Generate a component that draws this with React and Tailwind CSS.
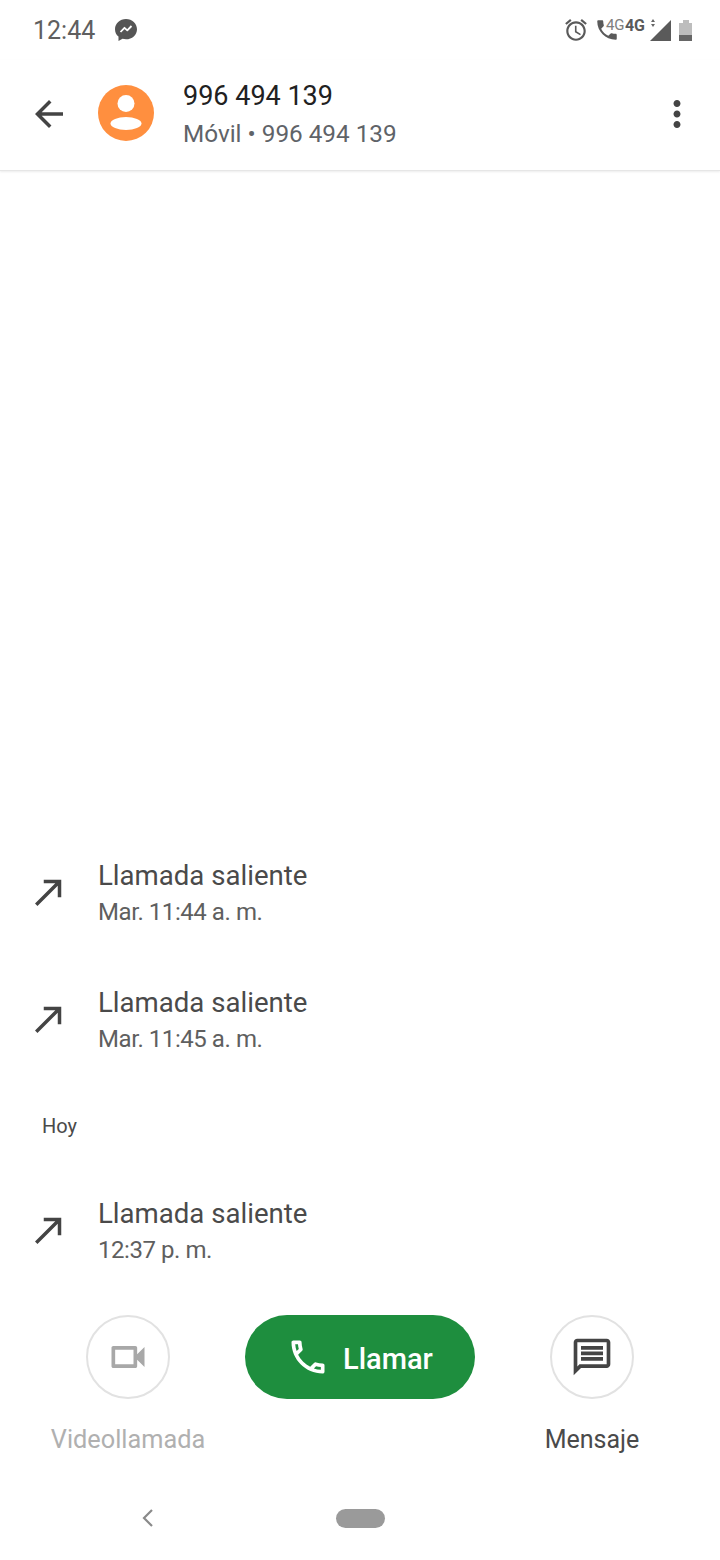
import React from 'react'

const font = { fontFamily: 'Roboto, "Liberation Sans", sans-serif' }

function Icon({ d, size = 42, className = '' }) {
  return (
    <svg width={size} height={size} viewBox="0 0 24 24" fill="currentColor" className={className}>
      <path d={d} />
    </svg>
  )
}

const paths = {
  back: 'M20 11H7.83l5.59-5.59L12 4l-8 8 8 8 1.41-1.41L7.83 13H20v-2z',
  more: 'M12 8c1.1 0 2-.9 2-2s-.9-2-2-2-2 .9-2 2 .9 2 2 2zm0 2c-1.1 0-2 .9-2 2s.9 2 2 2 2-.9 2-2-.9-2-2-2zm0 6c-1.1 0-2 .9-2 2s.9 2 2 2 2-.9 2-2-.9-2-2-2z',
  made: 'M9 5v2h6.59L4 18.59 5.41 20 17 8.41V15h2V5z',
  alarm: 'M22 5.72l-4.6-3.86-1.29 1.53 4.6 3.86L22 5.72zM7.88 3.39L6.6 1.86 2 5.71l1.29 1.53 4.59-3.85zM12.5 8H11v6l4.75 2.85.75-1.23-4-2.37V8zM12 4c-4.97 0-9 4.03-9 9s4.02 9 9 9c4.97 0 9-4.03 9-9s-4.03-9-9-9zm0 16c-3.87 0-7-3.13-7-7s3.13-7 7-7 7 3.13 7 7-3.13 7-7 7z',
  phoneFilled: 'M6.62 10.79c1.44 2.83 3.76 5.14 6.59 6.59l2.2-2.2c.27-.27.67-.36 1.02-.24 1.12.37 2.33.57 3.57.57.55 0 1 .45 1 1V20c0 .55-.45 1-1 1-9.39 0-17-7.61-17-17 0-.55.45-1 1-1h3.5c.55 0 1 .45 1 1 0 1.25.2 2.45.57 3.57.11.35.03.74-.25 1.02l-2.2 2.2z',
  phone: 'M6.54 5c.06.89.21 1.76.45 2.59l-1.2 1.2c-.41-1.2-.67-2.47-.76-3.79h1.51m9.86 12.02c.85.24 1.72.39 2.6.45v1.49c-1.32-.09-2.59-.35-3.8-.75l1.2-1.19M7.5 3H4c-.55 0-1 .45-1 1 0 9.39 7.61 17 17 17 .55 0 1-.45 1-1v-3.49c0-.55-.45-1-1-1-1.24 0-2.45-.2-3.57-.57-.1-.04-.21-.05-.31-.05-.26 0-.51.1-.71.29l-2.2 2.2c-2.83-1.45-5.15-3.76-6.59-6.59l2.2-2.2c.28-.28.36-.67.25-1.02C8.7 6.45 8.5 5.25 8.5 4c0-.55-.45-1-1-1z',
  video: 'M15 8v8H5V8h10m1-2H4c-.55 0-1 .45-1 1v10c0 .55.45 1 1 1h12c.55 0 1-.45 1-1v-3.5l4 4v-11l-4 4V7c0-.55-.45-1-1-1z',
  message: 'M20 2H4c-1.1 0-1.99.9-1.99 2L2 22l4-4h14c1.1 0 2-.9 2-2V4c0-1.1-.9-2-2-2zm0 14H5.17L4 17.17V4h16v12zM18 14H6v-2h12v2zm0-3H6V9h12v2zm0-3H6V6h12v2z',
}

function StatusBar() {
  return (
    <div className="h-[60px] flex items-center justify-between pl-[33px] pr-[28px] text-[#5f5f5f]">
      <div className="flex items-center">
        <span className="text-[25px] leading-none">12:44</span>
        <svg width="24" height="24" viewBox="0 0 24 24" className="ml-[19px]">
          <path fill="#555555" d="M12 1C5.9 1 1 5.5 1 11.2c0 3 1.3 5.6 3.5 7.4V23l4-2.2c1.1.3 2.3.5 3.5.5 6.1 0 11-4.5 11-10.1S18.100 1 12 1z" />
          <path fill="none" stroke="#ffffff" strokeWidth="1.8" strokeLinejoin="round" d="M6.500 14l4-4.200 2.800 2.500 4.200-4.300" />
        </svg>
      </div>
      <div className="flex items-center">
        <Icon d={paths.alarm} size={26} className="text-[#5a5a5a]" />
        <div className="relative ml-[5px] w-[26px] h-[26px]">
          <Icon d={paths.phoneFilled} size={26} className="absolute left-0 top-0 text-[#5a5a5a]" />
          <span className="absolute left-[12px] top-[1px] text-[15px] leading-none text-[#808080]">4G</span>
        </div>
        <span className="ml-[5px] mb-[8px] text-[16px] font-bold leading-none text-[#5a5a5a]">4G</span>
        <div className="relative ml-[5px]">
          <svg width="21" height="21" viewBox="0 0 21 21" className="block">
            <path fill="#5a5a5a" d="M21 0v21H0z" />
          </svg>
          <div className="absolute left-[1px] top-[-1px] flex flex-col gap-[2px]">
            <div className="w-0 h-0 border-x-[2px] border-x-transparent border-b-[3px] border-b-[#666666]" />
            <div className="w-0 h-0 border-x-[2px] border-x-transparent border-t-[3px] border-t-[#666666]" />
          </div>
        </div>
        <div className="ml-[8px] flex flex-col items-center">
          <div className="w-[6px] h-[3px] bg-[#bdbdbd]" />
          <div className="w-[13px] h-[18px] bg-[#bdbdbd] flex flex-col justify-end">
            <div className="h-[6px] bg-[#666666]" />
          </div>
        </div>
      </div>
    </div>
  )
}

function Header() {
  return (
    <div className="h-[111px] flex items-center border-b border-[#e6e6e6] shadow-[0_1px_2px_rgba(0,0,0,0.08)]">
      <Icon d={paths.back} className="ml-[28px] mb-[2px] text-[#444444]" />
      <svg width="56" height="56" viewBox="0 0 56 56" className="ml-[28px] mb-[4px]">
        <circle cx="28" cy="28" r="28" fill="#ff8f3f" />
        <circle cx="28" cy="18.500" r="8.500" fill="#ffffff" />
        <ellipse cx="28" cy="38.500" rx="15.500" ry="6.500" fill="#ffffff" />
      </svg>
      <div className="ml-[29px] flex-1">
        <div className="text-[27px] leading-[37px] text-[#212121]">996 494 139</div>
        <div className="text-[24.3px] leading-[37px] text-[#5f6368]">Móvil • 996 494 139</div>
      </div>
      <Icon d={paths.more} className="mr-[22px] mb-[2px] text-[#444444]" />
    </div>
  )
}

function CallRow({ time }) {
  return (
    <div className="h-[127px] flex items-center">
      <Icon d={paths.made} className="ml-[28px] mb-[4px] text-[#444444]" />
      <div className="ml-[28px]">
        <div className="text-[27.6px] leading-[37px] text-[#4a4a4a]">Llamada saliente</div>
        <div className="text-[24px] leading-[37px] tracking-[-0.44px] text-[#5f5f5f]">{time}</div>
      </div>
    </div>
  )
}

function RoundAction({ label, icon, iconClass, labelClass }) {
  return (
    <div className="w-[156px] flex flex-col items-center">
      <div className="w-[84px] h-[84px] rounded-full border-2 border-[#e2e2e2] flex items-center justify-center">
        <Icon d={icon} size={44} className={iconClass} />
      </div>
      <div className={`mt-[22px] leading-[37px] ${labelClass}`}>{label}</div>
    </div>
  )
}

export default function App() {
  return (
    <div style={font} className="w-[720px] h-[1560px] bg-white flex flex-col overflow-hidden">
      <StatusBar />
      <Header />

      {/* Call log */}
      <div className="flex-1 flex flex-col justify-end">
        <CallRow time="Mar. 11:44 a. m." />
        <CallRow time="Mar. 11:45 a. m." />
        <div className="h-[84px] flex items-center pl-[42px] text-[20px] text-[#4a4a4a]">Hoy</div>
        <CallRow time="12:37 p. m." />
      </div>

      {/* Actions */}
      <div className="pt-[20px] px-[50px] flex items-start justify-between">
        <RoundAction label="Videollamada" icon={paths.video} iconClass="text-[#a8a8a8]" labelClass="text-[25.3px] text-[#b0b0b0]" />
        <div className="w-[230px] h-[84px] rounded-full bg-[#1e8e3e] flex items-center pl-[41px] text-white">
          <Icon d={paths.phone} size={44} />
          <span className="ml-[13px] pt-[6px] text-[29px] font-medium">Llamar</span>
        </div>
        <RoundAction label="Mensaje" icon={paths.message} iconClass="text-[#444444]" labelClass="text-[25px] text-[#4a4a4a]" />
      </div>

      {/* Nav */}
      <div className="h-[102px] pt-[18px] flex items-center pl-[140px]">
        <svg width="16" height="20" viewBox="0 0 16 20" fill="none" stroke="#8a8a8a" strokeWidth="2.200">
          <path d="M12 2 4 10l8 8" />
        </svg>
        <div className="ml-[180px] w-[49px] h-[19px] rounded-full bg-[#9a9a9a]" />
      </div>
    </div>
  )
}
